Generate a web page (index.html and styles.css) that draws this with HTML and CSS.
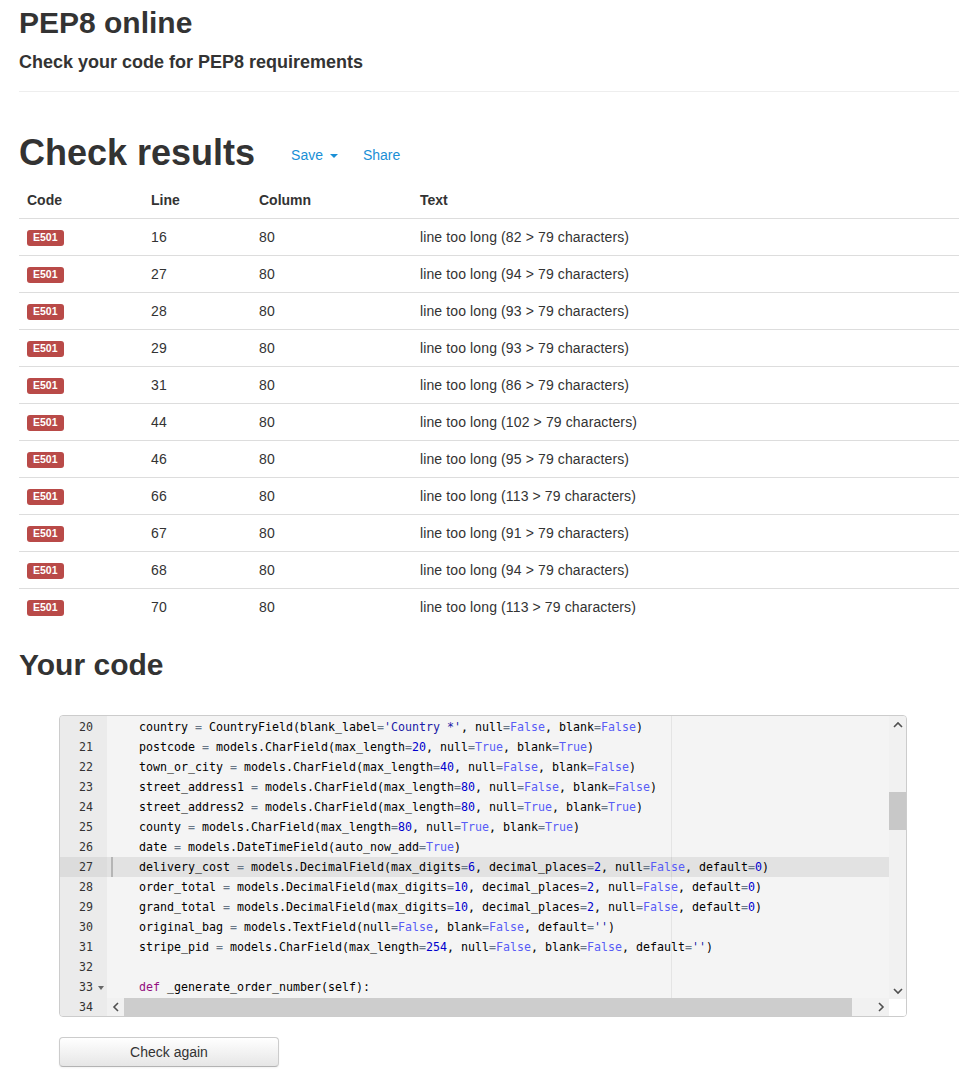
FILE: index.html
```html
<!DOCTYPE html>
<html>
<head>
<meta charset="utf-8">
<title>PEP8 online</title>
<link rel="stylesheet" href="styles.css">
</head>
<body>
<div class="container">
  <header class="page-header">
    <h1 class="site-title">PEP8 online</h1>
    <p class="site-sub">Check your code for PEP8 requirements</p>
  </header>

  <div class="results-head">
    <h1 class="results-title">Check results</h1>
    <div class="results-actions">
      <a class="action" href="#">Save <span class="caret"></span></a>
      <a class="action" href="#">Share</a>
    </div>
  </div>

  <table class="results">
    <colgroup>
      <col class="c-code"><col class="c-line"><col class="c-col"><col>
    </colgroup>
    <thead>
      <tr><th>Code</th><th>Line</th><th>Column</th><th>Text</th></tr>
    </thead>
    <tbody>
      <tr><td><span class="label">E501</span></td><td>16</td><td>80</td><td>line too long (82 &gt; 79 characters)</td></tr>
      <tr><td><span class="label">E501</span></td><td>27</td><td>80</td><td>line too long (94 &gt; 79 characters)</td></tr>
      <tr><td><span class="label">E501</span></td><td>28</td><td>80</td><td>line too long (93 &gt; 79 characters)</td></tr>
      <tr><td><span class="label">E501</span></td><td>29</td><td>80</td><td>line too long (93 &gt; 79 characters)</td></tr>
      <tr><td><span class="label">E501</span></td><td>31</td><td>80</td><td>line too long (86 &gt; 79 characters)</td></tr>
      <tr><td><span class="label">E501</span></td><td>44</td><td>80</td><td>line too long (102 &gt; 79 characters)</td></tr>
      <tr><td><span class="label">E501</span></td><td>46</td><td>80</td><td>line too long (95 &gt; 79 characters)</td></tr>
      <tr><td><span class="label">E501</span></td><td>66</td><td>80</td><td>line too long (113 &gt; 79 characters)</td></tr>
      <tr><td><span class="label">E501</span></td><td>67</td><td>80</td><td>line too long (91 &gt; 79 characters)</td></tr>
      <tr><td><span class="label">E501</span></td><td>68</td><td>80</td><td>line too long (94 &gt; 79 characters)</td></tr>
      <tr><td><span class="label">E501</span></td><td>70</td><td>80</td><td>line too long (113 &gt; 79 characters)</td></tr>
    </tbody>
  </table>

  <h1 class="code-title">Your code</h1>

  <div class="editor">
    <div class="gutter">
      <div class="gl">20</div>
      <div class="gl">21</div>
      <div class="gl">22</div>
      <div class="gl">23</div>
      <div class="gl">24</div>
      <div class="gl">25</div>
      <div class="gl">26</div>
      <div class="gl active">27</div>
      <div class="gl">28</div>
      <div class="gl">29</div>
      <div class="gl">30</div>
      <div class="gl">31</div>
      <div class="gl">32</div>
      <div class="gl fold">33</div>
      <div class="gl">34</div>
    </div>
    <div class="content">
      <div class="print-margin"></div>
      <div class="cl">    country <span class="o">=</span> CountryField(blank_label<span class="o">=</span><span class="s">'Country *'</span>, null<span class="o">=</span><span class="c">False</span>, blank<span class="o">=</span><span class="c">False</span>)</div>
      <div class="cl">    postcode <span class="o">=</span> models.CharField(max_length<span class="o">=</span><span class="n">20</span>, null<span class="o">=</span><span class="c">True</span>, blank<span class="o">=</span><span class="c">True</span>)</div>
      <div class="cl">    town_or_city <span class="o">=</span> models.CharField(max_length<span class="o">=</span><span class="n">40</span>, null<span class="o">=</span><span class="c">False</span>, blank<span class="o">=</span><span class="c">False</span>)</div>
      <div class="cl">    street_address1 <span class="o">=</span> models.CharField(max_length<span class="o">=</span><span class="n">80</span>, null<span class="o">=</span><span class="c">False</span>, blank<span class="o">=</span><span class="c">False</span>)</div>
      <div class="cl">    street_address2 <span class="o">=</span> models.CharField(max_length<span class="o">=</span><span class="n">80</span>, null<span class="o">=</span><span class="c">True</span>, blank<span class="o">=</span><span class="c">True</span>)</div>
      <div class="cl">    county <span class="o">=</span> models.CharField(max_length<span class="o">=</span><span class="n">80</span>, null<span class="o">=</span><span class="c">True</span>, blank<span class="o">=</span><span class="c">True</span>)</div>
      <div class="cl">    date <span class="o">=</span> models.DateTimeField(auto_now_add<span class="o">=</span><span class="c">True</span>)</div>
      <div class="cl active">    delivery_cost <span class="o">=</span> models.DecimalField(max_digits<span class="o">=</span><span class="n">6</span>, decimal_places<span class="o">=</span><span class="n">2</span>, null<span class="o">=</span><span class="c">False</span>, default<span class="o">=</span><span class="n">0</span>)</div>
      <div class="cl">    order_total <span class="o">=</span> models.DecimalField(max_digits<span class="o">=</span><span class="n">10</span>, decimal_places<span class="o">=</span><span class="n">2</span>, null<span class="o">=</span><span class="c">False</span>, default<span class="o">=</span><span class="n">0</span>)</div>
      <div class="cl">    grand_total <span class="o">=</span> models.DecimalField(max_digits<span class="o">=</span><span class="n">10</span>, decimal_places<span class="o">=</span><span class="n">2</span>, null<span class="o">=</span><span class="c">False</span>, default<span class="o">=</span><span class="n">0</span>)</div>
      <div class="cl">    original_bag <span class="o">=</span> models.TextField(null<span class="o">=</span><span class="c">False</span>, blank<span class="o">=</span><span class="c">False</span>, default<span class="o">=</span><span class="s">''</span>)</div>
      <div class="cl">    stripe_pid <span class="o">=</span> models.CharField(max_length<span class="o">=</span><span class="n">254</span>, null<span class="o">=</span><span class="c">False</span>, blank<span class="o">=</span><span class="c">False</span>, default<span class="o">=</span><span class="s">''</span>)</div>
      <div class="cl"> </div>
      <div class="cl">    <span class="k">def</span> _generate_order_number(self):</div>
      <div class="cl">        <span class="s">"""</span></div>
      <div class="hscroll">
        <span class="harrow">
          <svg width="8" height="10" viewBox="0 0 8 10"><path d="M6 1 L2 5 L6 9" fill="none" stroke="#505050" stroke-width="1.6"/></svg>
        </span>
        <span class="hthumb"></span>
        <span class="htrack"></span>
        <span class="harrow">
          <svg width="8" height="10" viewBox="0 0 8 10"><path d="M2 1 L6 5 L2 9" fill="none" stroke="#505050" stroke-width="1.6"/></svg>
        </span>
      </div>
    </div>
    <div class="vscroll">
      <span class="varrow">
        <svg width="10" height="8" viewBox="0 0 10 8"><path d="M1 6 L5 2 L9 6" fill="none" stroke="#505050" stroke-width="1.6"/></svg>
      </span>
      <span class="vtrack top"></span>
      <span class="vthumb"></span>
      <span class="vtrack"></span>
      <span class="varrow">
        <svg width="10" height="8" viewBox="0 0 10 8"><path d="M1 2 L5 6 L9 2" fill="none" stroke="#505050" stroke-width="1.6"/></svg>
      </span>
      <span class="corner"></span>
    </div>
  </div>

  <div class="actions">
    <button class="btn" type="button">Check again</button>
  </div>
</div>
</body>
</html>
```

FILE: styles.css
```css
* { box-sizing: border-box; }

html, body {
  margin: 0;
  padding: 0;
  background: #fff;
}

body {
  font-family: "Liberation Sans", Arial, Helvetica, sans-serif;
  font-size: 14px;
  line-height: 20px;
  color: #333;
}

.container {
  width: 970px;
  margin: 0 auto;
  padding: 0 15px;
}

.page-header {
  padding-top: 6px;
  border-bottom: 1px solid #eee;
  padding-bottom: 18px;
}

.site-title {
  margin: 0;
  font-size: 30px;
  line-height: 33px;
  font-weight: bold;
}

.site-sub {
  margin: 14px 0 0;
  font-size: 18px;
  line-height: 1.1;
  font-weight: bold;
}

.results-head {
  display: flex;
  align-items: center;
  margin-top: 41px;
}

.results-title {
  margin: 0;
  font-size: 36px;
  line-height: 1.1;
  font-weight: bold;
}

.results-actions {
  display: flex;
  align-items: center;
  gap: 25px;
  margin-left: 36px;
  padding-top: 5px;
}

.action {
  color: #1a8fd6;
  text-decoration: none;
  font-size: 14px;
  line-height: 20px;
}

.caret {
  display: inline-block;
  width: 0;
  height: 0;
  margin-left: 3px;
  vertical-align: middle;
  border-top: 4px solid #1a8fd6;
  border-left: 4px solid transparent;
  border-right: 4px solid transparent;
}

.results {
  width: 100%;
  margin-top: 10px;
  border-collapse: collapse;
  table-layout: fixed;
}

.c-code { width: 124px; }
.c-line { width: 108px; }
.c-col { width: 161px; }

.results th,
.results td {
  padding: 8px;
  text-align: left;
  vertical-align: top;
  line-height: 20px;
}

.results th {
  font-weight: bold;
}

.results td {
  border-top: 1px solid #ddd;
  letter-spacing: 0.12px;
}

.label {
  display: inline-block;
  padding: 2px 6px 3px;
  font-size: 10.5px;
  font-weight: bold;
  line-height: 1;
  letter-spacing: 0;
  color: #fff;
  background: #b94a48;
  border-radius: 3px;
  vertical-align: 1px;
}

.code-title {
  margin: 23px 0 0;
  font-size: 30px;
  line-height: 33px;
  font-weight: bold;
}

.editor {
  position: relative;
  display: flex;
  margin: 34px 0 0 40px;
  width: 848px;
  height: 302px;
  border: 1px solid #ccc;
  border-radius: 4px;
  overflow: hidden;
  background: #f4f4f4;
  font-family: "DejaVu Sans Mono", "Liberation Mono", monospace;
  font-size: 11.63px;
  line-height: 20px;
  color: #000;
}

.gutter {
  width: 47px;
  flex: none;
  padding-top: 1px;
  background: #ebebeb;
  color: #333;
}

.gl {
  position: relative;
  height: 20px;
  padding-right: 14px;
  text-align: right;
}

.gl.active {
  background: #dcdcdc;
}

.gl.fold::after {
  content: "";
  position: absolute;
  right: 3px;
  top: 9px;
  border-top: 4px solid #666;
  border-left: 3px solid transparent;
  border-right: 3px solid transparent;
}

.content {
  position: relative;
  flex: 1;
  padding-top: 1px;
  overflow: hidden;
}

.print-margin {
  position: absolute;
  left: 564px;
  top: 0;
  bottom: 0;
  width: 1px;
  background: #e4e4e4;
}

.cl {
  position: relative;
  height: 20px;
  padding-left: 4px;
  white-space: pre;
}

.cl.active {
  background: rgba(0, 0, 0, 0.07);
}

.cl.active::before {
  content: "";
  position: absolute;
  left: 4px;
  top: 0;
  width: 2px;
  height: 20px;
  background: #b5b5b5;
}

.o { color: rgb(104, 118, 135); }
.c { color: rgb(88, 92, 246); }
.n { color: rgb(0, 0, 205); }
.s { color: #1a1aa6; }
.k { color: rgb(147, 15, 128); }

.hscroll {
  position: absolute;
  left: 0;
  right: 0;
  bottom: 0;
  height: 18px;
  display: flex;
  background: #f1f1f1;
}

.harrow {
  width: 17px;
  flex: none;
  display: flex;
  align-items: center;
  justify-content: center;
  background: #f1f1f1;
}

.hthumb {
  width: 728px;
  flex: none;
  background: #cdcdcd;
}

.htrack {
  flex: 1;
}

.vscroll {
  width: 17px;
  flex: none;
  display: flex;
  flex-direction: column;
  background: #f1f1f1;
}

.varrow {
  height: 17px;
  flex: none;
  display: flex;
  align-items: center;
  justify-content: center;
}

.vtrack.top {
  height: 59px;
  flex: none;
}

.vthumb {
  height: 38px;
  flex: none;
  background: #c8c8c8;
}

.vtrack {
  flex: 1;
}

.corner {
  height: 17px;
  flex: none;
  background: #fff;
}

.actions {
  margin: 20px 0 0 40px;
  padding-bottom: 6px;
}

.btn {
  display: block;
  width: 220px;
  height: 30px;
  padding: 4px 12px;
  font-family: "Liberation Sans", Arial, Helvetica, sans-serif;
  font-size: 14px;
  line-height: 20px;
  color: #333;
  text-align: center;
  background: linear-gradient(to bottom, #ffffff, #e6e6e6);
  border: 1px solid #ccc;
  border-bottom-color: #b3b3b3;
  border-radius: 4px;
  box-shadow: inset 0 1px 0 rgba(255, 255, 255, 0.2), 0 1px 2px rgba(0, 0, 0, 0.05);
}
```
